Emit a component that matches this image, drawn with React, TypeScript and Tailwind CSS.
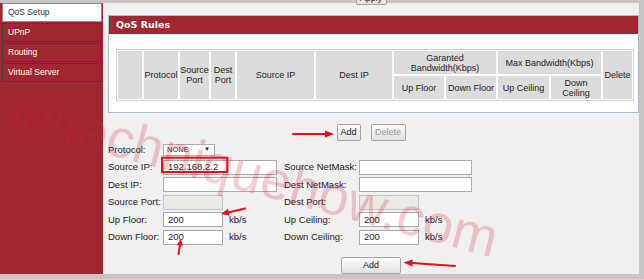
import React from "react";

const font = { fontFamily: '"Liberation Sans", Arial, sans-serif' };

const SideItem = ({ label, active }: { label: string; active?: boolean }) => (
  <div
    className={
      active
        ? "h-[19px] ml-[2px] mr-[1px] mb-px flex items-center pl-[5px] bg-white border border-[#8a8a8a] text-[8.5px] text-[#333]"
        : "h-[19px] ml-[2px] mr-[1px] mb-px flex items-center pl-[5px] bg-[#a0272f] border border-[#3e3e3e] text-[8.5px] text-white"
    }
  >
    {label}
  </div>
);

const Th = ({ children, className = "" }: { children?: React.ReactNode; className?: string }) => (
  <div className={"bg-[#dcdcdc] flex items-center justify-center text-center text-[9px] leading-[10px] text-[#222] " + className}>
    {children}
  </div>
);

const Btn = ({ children, className = "", disabled }: { children: React.ReactNode; className?: string; disabled?: boolean }) => (
  <button
    className={
      "h-[17px] flex items-center justify-center rounded-[2px] border border-[#a5a5a5] bg-gradient-to-b from-[#fbfbfb] to-[#e2e2e2] text-[9px] " +
      (disabled ? "text-[#9a9a9a] " : "text-[#222] ") +
      className
    }
  >
    {children}
  </button>
);

const Input = ({ value = "", w, disabled }: { value?: string; w: string; disabled?: boolean }) => (
  <div
    className={
      "h-[15px] flex items-center pl-[4px] text-[9.5px] text-[#222] border " +
      (disabled ? "bg-[#ebebe6] border-[#c4c4c4] " : "bg-white border-[#ababab] ") +
      w
    }
  >
    {value}
  </div>
);

const Label = ({ children }: { children: React.ReactNode }) => (
  <div className="text-[9.5px] text-[#222] whitespace-nowrap">{children}</div>
);

export default function App() {
  return (
    <div className="relative w-[644px] h-[279px] overflow-hidden bg-[#c6c6c6]" style={font}>
      <div className="flex h-full pt-[3px] pb-[5px] pr-[5px]">
        {/* sidebar */}
        <div className="w-[103px] bg-[#a0272f] flex flex-col">
          <SideItem label="QoS Setup" active />
          <SideItem label="UPnP" />
          <SideItem label="Routing" />
          <SideItem label="Virtual Server" />
        </div>

        {/* main */}
        <div className="flex-1 bg-[#f0f0f0] flex flex-col">
          <div className="h-[17px] flex justify-center">
            <Btn className="w-[31px] -mt-[15px] pt-[5px]">Apply</Btn>
          </div>

          <div className="ml-[5px] border border-[#a9bccf] bg-white">
            <div className="h-[18px] bg-[#a0272f] flex items-center pl-[7px]">
              <span className="text-white font-bold text-[9.5px]" style={{ fontFamily: '"DejaVu Sans", Verdana, sans-serif' }}>
                QoS Rules
              </span>
            </div>
            <div className="pt-[15px] pb-[6px] pl-[7px]">
              <div className="inline-grid grid-cols-[24px_34px_29px_24px_77px_76px_50px_50px_51px_50px_29px] grid-rows-[23px_23px] gap-[2px] p-px border border-[#d2d2d2]">
                <Th className="row-span-2" />
                <Th className="row-span-2">Protocol</Th>
                <Th className="row-span-2">Source<br />Port</Th>
                <Th className="row-span-2">Dest<br />Port</Th>
                <Th className="row-span-2">Source IP</Th>
                <Th className="row-span-2">Dest IP</Th>
                <Th className="col-span-2">Garanted<br />Bandwidth(Kbps)</Th>
                <Th className="col-span-2">Max Bandwidth(Kbps)</Th>
                <Th className="row-span-2">Delete</Th>
                <Th>Up Floor</Th>
                <Th>Down Floor</Th>
                <Th>Up Ceiling</Th>
                <Th>Down<br />Ceiling</Th>
              </div>
            </div>
          </div>

          <div className="mt-[11px] flex justify-center gap-[10px]">
            <Btn className="w-[24px]">Add</Btn>
            <Btn className="w-[35px]" disabled>Delete</Btn>
          </div>

          <div className="ml-[5px] grid grid-cols-[55px_121px_75px_1fr] auto-rows-[17.5px] items-center">
            <Label>Protocol:</Label>
            <div className="col-span-3 h-[12px] w-[52px] bg-white border border-[#ababab] flex items-center justify-between pl-[3px] pr-[4px] text-[7.5px] text-[#222]">
              <span>NONE</span>
              <span className="text-[6px]">▼</span>
            </div>

            <Label>Source IP:</Label>
            <Input value="192.168.2.2" w="w-[114px]" />
            <Label>Source NetMask:</Label>
            <Input w="w-[113px]" />

            <Label>Dest IP:</Label>
            <Input w="w-[114px]" />
            <Label>Dest NetMask:</Label>
            <Input w="w-[113px]" />

            <Label>Source Port:</Label>
            <Input w="w-[60px]" disabled />
            <Label>Dest Port:</Label>
            <Input w="w-[60px]" disabled />

            <Label>Up Floor:</Label>
            <div className="flex items-center gap-[6px]">
              <Input value="200" w="w-[60px]" />
              <Label>kb/s</Label>
            </div>
            <Label>Up Ceiling:</Label>
            <div className="flex items-center gap-[6px]">
              <Input value="200" w="w-[60px]" />
              <Label>kb/s</Label>
            </div>

            <Label>Down Floor:</Label>
            <div className="flex items-center gap-[6px]">
              <Input value="200" w="w-[60px]" />
              <Label>kb/s</Label>
            </div>
            <Label>Down Ceiling:</Label>
            <div className="flex items-center gap-[6px]">
              <Input value="200" w="w-[60px]" />
              <Label>kb/s</Label>
            </div>
          </div>

          <div className="mt-[11px] flex justify-center">
            <Btn className="w-[60px]">Add</Btn>
          </div>
        </div>
      </div>

      {/* watermark */}
      <div
        className="absolute left-[19px] top-[83px] origin-top-left rotate-[15deg] text-[54px] leading-none whitespace-nowrap text-[#d8202c3a] pointer-events-none"
        style={font}
      >
        @techniquehow.com
      </div>

      {/* annotations */}
      <svg className="absolute inset-0 pointer-events-none" width="644" height="279">
        <rect x="162" y="157.7" width="65.3" height="14.3" fill="none" stroke="#e3101b" strokeWidth="2" />
        <g stroke="#e3101b" strokeWidth="2" strokeLinecap="round" fill="#e3101b">
          <line x1="293" y1="134" x2="326" y2="134" />
          <polygon points="334,134 325,130.5 325,137.5" stroke="none" />
          <line x1="245" y1="208.5" x2="229" y2="212.2" />
          <polygon points="221,214 229.6,215.6 228,208.8" stroke="none" />
          <line x1="178.5" y1="254" x2="179.9" y2="245.4" />
          <polygon points="181,238.5 182.9,245.9 176.9,244.9" stroke="none" />
          <line x1="455" y1="266" x2="412.5" y2="263.1" />
          <polygon points="403.5,262.5 412.7,259.6 412.3,266.6" stroke="none" />
        </g>
      </svg>
    </div>
  );
}
